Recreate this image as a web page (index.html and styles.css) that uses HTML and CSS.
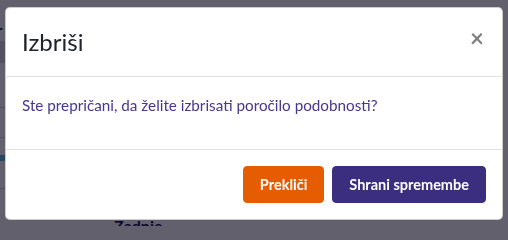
FILE: index.html
```html
<!DOCTYPE html>
<html lang="sl">
<head>
<meta charset="utf-8">
<title>Izbriši</title>
<link rel="stylesheet" href="styles.css">
</head>
<body>
<div class="page">
  <div class="bg-letter">r</div>
  <div class="bg-line l1"></div>
  <div class="bg-line l2"></div>
  <div class="bg-line l3"></div>
  <div class="bg-line l4"></div>
  <div class="bg-line l5"></div>
  <div class="bg-text">Zadnje</div>
</div>
<div class="backdrop">
  <div class="modal">
    <div class="modal-header">
      <h5 class="modal-title">Izbriši</h5>
      <button class="close" type="button" aria-label="Close">×</button>
    </div>
    <div class="modal-body">
      <p>Ste prepričani, da želite izbrisati poročilo podobnosti?</p>
    </div>
    <div class="modal-footer">
      <button class="btn btn-cancel" type="button">Prekliči</button>
      <button class="btn btn-save" type="button">Shrani spremembe</button>
    </div>
  </div>
</div>
</body>
</html>
```
FILE: styles.css
```css
* { box-sizing: border-box; }
html, body { margin: 0; padding: 0; overflow: hidden; }
body {
  font-family: Lato, "Noto Sans", sans-serif;
  font-size: 15px;
  line-height: 1.5;
  width: 508px;
  height: 226px;
  background: #f4f4f7;
}
.page {
  position: relative;
  width: 508px;
  height: 226px;
  overflow: hidden;
}
.bg-letter {
  position: absolute;
  left: -4px;
  top: 20px;
  font-size: 18px;
  line-height: 20px;
  color: #1c1a2a;
}
.bg-line {
  position: absolute;
  left: 0;
  width: 5px;
  height: 1px;
  background: #c7c7d0;
}
.l1 { top: 41px; height: 22px; background: #d0d0d8; }
.l2 { top: 107px; }
.l3 { top: 137px; }
.l4 { top: 155px; height: 6px; background: #5bb3d6; }
.l5 { top: 188px; }
.bg-text {
  position: absolute;
  left: 114px;
  top: 216px;
  font-weight: 700;
  font-size: 16px;
  line-height: 20px;
  color: #1b1150;
}
.backdrop {
  position: fixed;
  inset: 0;
  background: rgba(8, 5, 25, 0.62);
  padding: 7px 5px;
}
.modal {
  width: 498px;
  background: #fff;
  border: 1px solid rgba(0, 0, 0, 0.2);
  border-radius: 5px;
  display: flex;
  flex-direction: column;
}
.modal-header {
  display: flex;
  align-items: flex-start;
  justify-content: space-between;
  padding: 16px;
  border-bottom: 1px solid #dee2e6;
}
.modal-title {
  margin: 0;
  font-size: 24px;
  font-weight: 400;
  line-height: 36px;
  color: #212529;
}
.close {
  background: none;
  border: 0;
  padding: 0;
  margin: 0 2px 0 0;
  font-family: inherit;
  font-size: 24px;
  font-weight: 700;
  line-height: 28px;
  color: #000;
  opacity: 0.5;
  text-shadow: 0 1px 0 #fff;
}
.modal-body {
  padding: 16px;
}
.modal-body p {
  margin: 0 0 16px;
  font-size: 15.25px;
  line-height: 24px;
  color: #45388f;
}
.modal-footer {
  display: flex;
  justify-content: flex-end;
  align-items: center;
  gap: 8px;
  padding: 16px;
  border-top: 1px solid #dee2e6;
}
.btn {
  font-family: inherit;
  font-size: 14.5px;
  line-height: 23px;
  padding: 6px 16px;
  border: 1px solid transparent;
  border-radius: 4px;
  color: #fff;
  font-weight: 700;
}
.btn-cancel {
  background: #e65c00;
  border-color: #e65c00;
}
.btn-save {
  background: #3b2e7e;
  border-color: #3b2e7e;
}
```
